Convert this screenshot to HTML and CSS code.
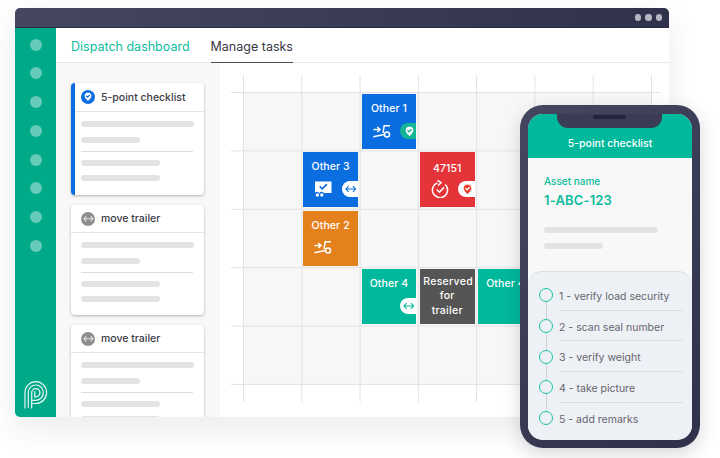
FILE: index.html
```html
<!DOCTYPE html>
<html lang="en">
<head>
<meta charset="utf-8">
<title>Dispatch dashboard</title>
<link rel="stylesheet" href="styles.css">
</head>
<body>
<svg class="defs" width="0" height="0" aria-hidden="true">
  <symbol id="pin" viewBox="0 0 12 14">
    <path d="M6 .3C2.800.3.4 2.700.4 5.600c0 3.100 3 6 5.600 8.200 2.600-2.200 5.600-5.100 5.600-8.200C11.600 2.700 9.200.3 6 .3z" fill="currentColor"/>
    <path class="pin-check" d="M3.300 5.500l2.100 2.100 3.400-3.400" fill="none" stroke-width="1.800"/>
  </symbol>
  <symbol id="swap" viewBox="0 0 16 10">
    <path d="M1.500 5h13M5 1L1.300 5 5 9M11 1l3.700 4L11 9" fill="none" stroke="currentColor" stroke-width="1.500"/>
  </symbol>
  <symbol id="trailer" viewBox="0 0 18 13">
    <path d="M.5 4.500h6.300M4.300 2L7 4.500 4.300 7" fill="none" stroke="currentColor" stroke-width="1.500"/>
    <path d="M17 .8h-5.800L10 8" fill="none" stroke="currentColor" stroke-width="1.500"/>
    <path d="M.3 11.800l11-2.400" fill="none" stroke="currentColor" stroke-width="1.500"/>
    <circle cx="14" cy="9.500" r="2.500" fill="none" stroke="currentColor" stroke-width="1.500"/>
  </symbol>
  <symbol id="truck" viewBox="0 0 18 16">
    <path d="M1 .5h16.500v11.500H9.800a2.400 2.400 0 0 0-4.300 0H5a2.400 2.400 0 0 0-4-.2z" fill="currentColor"/>
    <circle cx="3.400" cy="14" r="1.700" fill="currentColor"/>
    <circle cx="7.800" cy="14" r="1.700" fill="currentColor"/>
    <path d="M5.700 5.300l2.500 2.500 4.700-4.700" fill="none" stroke="#0a6de0" stroke-width="1.600"/>
  </symbol>
  <symbol id="redo" viewBox="0 0 18 18">
    <path d="M6.500 2.900A7.600 7.600 0 1 0 14.200 4.500" fill="none" stroke="currentColor" stroke-width="1.500"/>
    <path d="M6.500 .3L10 2.700 7 5.500" fill="none" stroke="currentColor" stroke-width="1.500"/>
    <path d="M5.700 9.500l2.700 2.700 4.600-4.800" fill="none" stroke="currentColor" stroke-width="1.600"/>
  </symbol>
</svg>

<main class="window">
  <header class="titlebar">
    <span class="win-dot"></span><span class="win-dot"></span><span class="win-dot"></span>
  </header>
  <div class="app">
    <nav class="rail">
      <span class="rail-dot"></span><span class="rail-dot"></span><span class="rail-dot"></span><span class="rail-dot"></span>
      <span class="rail-dot"></span><span class="rail-dot"></span><span class="rail-dot"></span><span class="rail-dot"></span>
      <svg class="logo" viewBox="0 0 24 28" fill="none" stroke="#fff" stroke-width="1.200" stroke-opacity=".9">
        <path d="M1 27.500V11.500a10.800 10.800 0 0 1 21.600 0 10.800 10.800 0 0 1-10.800 11H8.200"/>
        <path d="M4.300 26.800V11.500a7.500 7.500 0 0 1 15 0 7.500 7.500 0 0 1-7.500 7.800H8.200"/>
        <path d="M7.700 27.500V11.800a4.100 4.100 0 0 1 8.200 0 4.100 4.100 0 0 1-4.100 4.100H10.800V10"/>
      </svg>
    </nav>
    <div class="content">
      <div class="tabs">
        <a class="tab tab-active">Dispatch dashboard</a>
        <a class="tab tab-current">Manage tasks</a>
      </div>
      <div class="workspace">
        <aside class="queue">
          <article class="card card-selected">
            <h3 class="card-head"><span class="round round-blue"><svg class="round-pin"><use href="#pin"/></svg></span>5-point checklist</h3>
            <div class="card-body">
              <div class="bar bar-full"></div><div class="bar bar-short"></div>
              <hr class="rule">
              <div class="bar bar-mid"></div><div class="bar bar-mid"></div>
            </div>
          </article>
          <article class="card">
            <h3 class="card-head"><span class="round round-gray"><svg class="round-swap"><use href="#swap"/></svg></span>move trailer</h3>
            <div class="card-body">
              <div class="bar bar-full"></div><div class="bar bar-short"></div>
              <hr class="rule">
              <div class="bar bar-mid"></div><div class="bar bar-mid"></div>
            </div>
          </article>
          <article class="card">
            <h3 class="card-head"><span class="round round-gray"><svg class="round-swap"><use href="#swap"/></svg></span>move trailer</h3>
            <div class="card-body">
              <div class="bar bar-full"></div><div class="bar bar-short"></div>
              <hr class="rule">
              <div class="bar bar-mid"></div><div class="bar bar-mid"></div>
            </div>
          </article>
        </aside>
        <section class="board">
          <div class="task task-blue c4 r2">
            <span class="task-name">Other 1</span>
            <div class="task-foot">
              <svg class="ico-trailer"><use href="#trailer"/></svg>
              <span class="pill pill-teal"><svg class="pill-pin pin-on-teal"><use href="#pin"/></svg></span>
            </div>
          </div>
          <div class="task task-blue c3 r3">
            <span class="task-name">Other 3</span>
            <div class="task-foot">
              <svg class="ico-truck"><use href="#truck"/></svg>
              <span class="pill pill-white"><svg class="pill-swap swap-blue"><use href="#swap"/></svg></span>
            </div>
          </div>
          <div class="task task-red c5 r3">
            <span class="task-name task-num">47151</span>
            <div class="task-foot task-foot-num">
              <svg class="ico-redo"><use href="#redo"/></svg>
              <span class="pill pill-white"><svg class="pill-pin pin-red"><use href="#pin"/></svg></span>
            </div>
          </div>
          <div class="task task-orange c3 r4">
            <span class="task-name">Other 2</span>
            <div class="task-foot">
              <svg class="ico-trailer"><use href="#trailer"/></svg>
            </div>
          </div>
          <div class="task task-teal c4 r5">
            <span class="task-name">Other 4</span>
            <div class="task-foot task-foot-end">
              <span class="pill pill-white"><svg class="pill-swap swap-teal"><use href="#swap"/></svg></span>
            </div>
          </div>
          <div class="task task-gray c5 r5">
            <span class="task-reserved">Reserved for trailer</span>
          </div>
          <div class="task task-teal c6 r5">
            <span class="task-name">Other 4</span>
          </div>
        </section>
      </div>
    </div>
  </div>
</main>

<aside class="phone">
  <div class="screen">
    <div class="notch"><span class="speaker"></span></div>
    <h2 class="phone-title">5-point checklist</h2>
    <div class="asset">
      <p class="asset-label">Asset name</p>
      <p class="asset-id">1-ABC-123</p>
      <div class="bar phone-bar-long"></div>
      <div class="bar phone-bar-short"></div>
    </div>
    <ol class="steps">
      <li class="step"><span class="step-mark"></span><span class="step-text">1 - verify load security</span></li>
      <li class="step"><span class="step-mark"></span><span class="step-text">2 - scan seal number</span></li>
      <li class="step"><span class="step-mark"></span><span class="step-text">3 - verify weight</span></li>
      <li class="step"><span class="step-mark"></span><span class="step-text">4 - take picture</span></li>
      <li class="step step-last"><span class="step-mark"></span><span class="step-text">5 - add remarks</span></li>
    </ol>
  </div>
</aside>
</body>
</html>
```
FILE: styles.css
```css
* { box-sizing: border-box; }
html, body { margin: 0; padding: 0; }
body {
  width: 720px;
  height: 458px;
  overflow: hidden;
  position: relative;
  background: #fff;
  font-family: Inter, "Liberation Sans", sans-serif;
  padding: 8px 0 0 15px;
}
.defs { position: absolute; }

.window {
  width: 654px;
  height: 409px;
  border-radius: 5px;
  box-shadow: 0 12px 30px rgba(40, 40, 60, .09);
  overflow: hidden;
  display: flex;
  flex-direction: column;
  background: #fff;
}
.titlebar {
  height: 20px;
  flex: none;
  background: linear-gradient(90deg, #45465f, #30314a);
  border-bottom: 1px solid #2a2b40;
  display: flex;
  align-items: center;
  justify-content: flex-end;
  gap: 4px;
  padding-right: 7px;
}
.win-dot { width: 6.500px; height: 6.500px; border-radius: 50%; background: #b6b6c2; }
.app { flex: 1; display: flex; min-height: 0; }

.rail {
  width: 41px;
  flex: none;
  background: #00a988;
  display: flex;
  flex-direction: column;
  align-items: center;
  gap: 16.750px;
  padding-top: 10.500px;
  position: relative;
}
.rail-dot { width: 12px; height: 12px; border-radius: 50%; background: #66cbb8; flex: none; }
.logo { width: 24px; height: 28px; margin-top: auto; margin-bottom: 8px; }

.content { flex: 1; display: flex; flex-direction: column; min-width: 0; }
.tabs {
  height: 35px;
  flex: none;
  display: flex;
  gap: 21px;
  padding-left: 15px;
  border-bottom: 1.500px solid #e6e6e6;
}
.tab {
  font-size: 12.500px;
  line-height: 38px;
  height: 35px;
}
.tab-active { color: #0cbd9d; }
.tab-current { color: #37373f; border-bottom: 1.500px solid #4c4c55; }

.workspace { flex: 1; display: flex; min-height: 0; }
.queue {
  width: 164px;
  flex: none;
  background: #f8f8f8;
  padding: 20px 0 0 15px;
  overflow: hidden;
  display: flex;
  flex-direction: column;
  gap: 10px;
}
.card {
  width: 133px;
  height: 110px;
  flex: none;
  background: #fff;
  border-radius: 4px;
  box-shadow: 0 1px 3px rgba(0, 0, 0, .28);
  overflow: hidden;
}
.card-selected { border-left: 4px solid #0a6de0; height: 112px; }
.card-selected .card-head { padding-left: 6px; height: 29px; }
.card-selected .card-body { padding-left: 6px; }
.card-head {
  margin: 0;
  height: 28px;
  display: flex;
  align-items: center;
  gap: 6px;
  padding-left: 10px;
  font-size: 10.500px;
  font-weight: 500;
  color: #3c3c44;
  border-bottom: 1.500px solid #e4e4e4;
}
.round {
  width: 14px;
  height: 14px;
  border-radius: 50%;
  display: flex;
  align-items: center;
  justify-content: center;
  flex: none;
}
.round-blue { background: #0a6de0; }
.round-gray { background: #8e8e8e; }
.round-pin { width: 8px; height: 9.500px; color: #fff; stroke: #0a6de0; }
.round-swap { width: 11px; height: 7.500px; color: #e4e4e4; }
.pin-check { stroke: inherit; }

.card-body { padding: 9px 10px 0; }
.bar { height: 6px; border-radius: 3px; background: #e3e3e3; }
.bar-full { width: 113px; }
.bar-short { width: 59px; margin-top: 10px; }
.bar-mid { width: 79px; margin-top: 9px; }
.rule { border: 0; border-top: 1px solid #ddd; width: 112px; margin: 8px 0 -1px; }

.board {
  flex: none;
  margin: 12px 0 0 11px;
  height: 327px;
  width: 429px;
  display: grid;
  grid-template-columns: 12px repeat(7, 58.290px) 9px;
  grid-template-rows: 17px repeat(5, 58.400px) 18px;
  background-color: #fff;
  background-image:
    linear-gradient(#e2e2e2 1.300px, transparent 1.300px),
    linear-gradient(90deg, #e2e2e2 1.300px, transparent 1.300px),
    linear-gradient(#f7f7f7, #f7f7f7);
  background-size: 100% 58.400px, 58.290px 100%, 408px 292px;
  background-position: 0 17px, 12px 0, 12px 17px;
  background-repeat: repeat-y, repeat-x, no-repeat;
}

.task {
  margin: 2px 1.500px 1.400px 2px;
  color: #fff;
  overflow: hidden;
  display: flex;
  flex-direction: column;
  align-items: center;
  font-size: 10.500px;
  font-weight: 500;
  letter-spacing: .1px;
}
.c3 { grid-column: 3; } .c4 { grid-column: 4; } .c5 { grid-column: 5; } .c6 { grid-column: 6; }
.r2 { grid-row: 2; } .r3 { grid-row: 3; } .r4 { grid-row: 4; } .r5 { grid-row: 5; }
.task-blue { background: #0a6de0; }
.task-red { background: #e4343a; }
.task-orange { background: #e5811c; }
.task-teal { background: #00b89b; }
.task-gray { background: #555; }
.task-name { margin-top: 8px; line-height: 14px; }
.task-num { margin-top: 11px; line-height: 12px; }
.task-foot {
  align-self: stretch;
  margin-top: 7px;
  height: 16px;
  display: flex;
  align-items: center;
  justify-content: space-between;
  padding-left: 11px;
}
.task-foot-num { margin-top: 6px; }
.task-foot-end { justify-content: flex-end; margin-top: 7px; }
.ico-trailer { width: 18px; height: 13px; color: #fff; flex: none; }
.ico-truck { width: 18px; height: 16px; color: #fff; flex: none; }
.ico-redo { width: 18px; height: 18px; color: #fff; flex: none; }
.pill {
  width: 16.500px;
  height: 16px;
  border-radius: 8px 0 0 8px;
  display: flex;
  align-items: center;
  justify-content: center;
  flex: none;
}
.pill-white { background: #fff; }
.pill-teal { background: #14b596; }
.pill-pin { width: 9px; height: 10.500px; margin-left: 2px; }
.pill-swap { width: 11.500px; height: 8px; margin-left: 2px; }
.pin-on-teal { color: #fff; stroke: #14b596; }
.pin-red { color: #e8402a; stroke: #fff; }
.swap-blue { color: #0a6de0; }
.swap-teal { color: #00b89b; }
.task-reserved {
  width: 48px;
  text-align: center;
  margin-top: 6px;
  line-height: 14.300px;
  letter-spacing: .3px;
}

.phone {
  position: absolute;
  left: 520px;
  top: 105px;
  width: 180px;
  height: 343px;
  padding: 9px 8px 8px;
  border-radius: 23px;
  background: linear-gradient(135deg, #45465f, #2f3049);
  box-shadow: 0 6px 18px rgba(40, 40, 60, .18);
}
.screen {
  height: 100%;
  border-radius: 15px;
  background: #f8f8f8;
  overflow: hidden;
  position: relative;
  display: flex;
  flex-direction: column;
}
.notch {
  position: absolute;
  left: 29px;
  top: 0;
  width: 105px;
  height: 14px;
  background: #3b3c55;
  border-radius: 0 0 11px 11px;
  display: flex;
  justify-content: center;
}
.speaker { width: 33px; height: 4px; border-radius: 2px; background: #24253a; margin-top: 1px; }
.phone-title {
  margin: 0;
  height: 44px;
  flex: none;
  background: #00b89b;
  color: #fff;
  font-size: 10.500px;
  font-weight: 500;
  text-align: center;
  line-height: 60px;
}
.asset { height: 113px; flex: none; padding: 16px 16px 0; }
.asset-label { margin: 0; font-size: 10px; font-weight: 500; line-height: 14px; color: #0cbd9d; }
.asset-id { margin: 3px 0 0; font-size: 13px; font-weight: 600; line-height: 18px; color: #0cbd9d; letter-spacing: .15px; }
.phone-bar-long { width: 114px; margin-top: 18px; }
.phone-bar-short { width: 59px; margin-top: 10px; }

.steps {
  list-style: none;
  margin: 0;
  flex: 1;
  background: #edf0f5;
  border-top: 1px solid #d9dfe8;
  border-radius: 14px 14px 0 0;
  padding: 8px 8px 0 11px;
}
.step {
  height: 30.700px;
  display: flex;
  align-items: center;
  position: relative;
}
.step::before {
  content: "";
  position: absolute;
  left: 6.500px;
  top: 50%;
  height: 100%;
  width: 1.500px;
  background: #d0d0d4;
}
.step-last::before { display: none; }
.step-mark {
  width: 14px;
  height: 14px;
  flex: none;
  border: 1.500px solid #18c3a6;
  border-radius: 50%;
  background: #edf0f5;
  position: relative;
  z-index: 1;
}
.step-text {
  flex: 1;
  margin-left: 6px;
  margin-right: 1px;
  height: 100%;
  line-height: 33px;
  font-size: 10.500px;
  color: #66666e;
  border-bottom: 1.500px solid #dcdcde;
}
.step-last .step-text { border-bottom: 0; }
```
